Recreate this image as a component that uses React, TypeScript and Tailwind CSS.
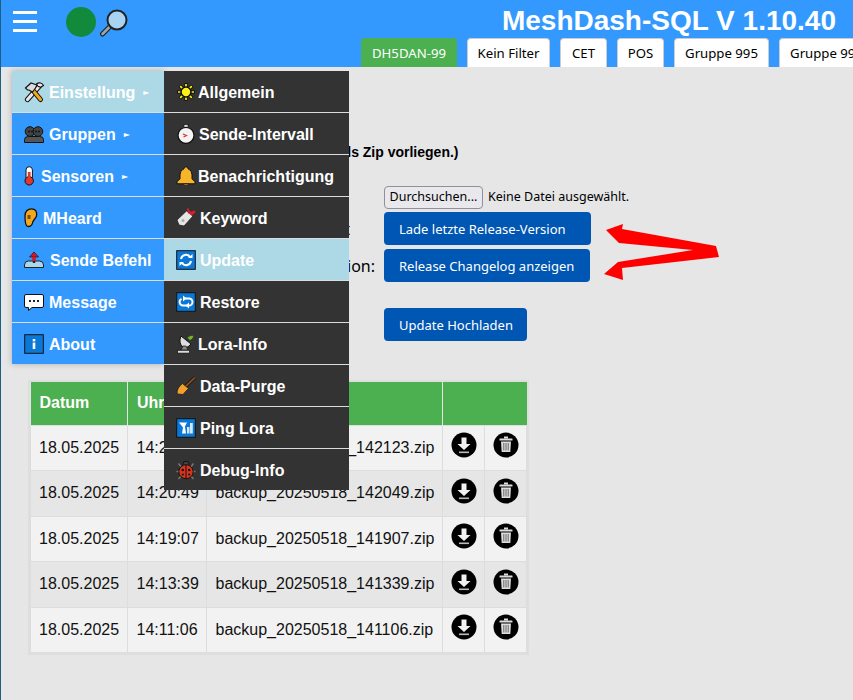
import React from "react";

const S = ({ children, className = "w-5 h-5" }: { children: React.ReactNode; className?: string }) => (
  <svg viewBox="0 0 20 20" className={className + " shrink-0 overflow-visible"}>{children}</svg>
);

const Tools = () => (
  <S>
    <path d="M3.5 17.5 L15 4.5" stroke="#111" strokeWidth="5.2" strokeLinecap="round" />
    <path d="M3.5 17.5 L15 4.5" stroke="#e8e8e8" strokeWidth="3.2" strokeLinecap="round" />
    <path d="M16.5 17.5 L7 6" stroke="#111" strokeWidth="5" strokeLinecap="round" />
    <path d="M16.5 17.5 L7 6" stroke="#f2a81d" strokeWidth="3" strokeLinecap="round" />
    <path d="M1.5 6 L7 1 L13 3 L11.5 6 L8.5 10 L5 8 L3.5 8 Z" fill="#ddd" stroke="#111" strokeWidth="1.2" />
    <path d="M12.5 2 a4.5 4.5 0 0 1 7 1.5 l-3 1.8 l-2.4 -1 z" fill="#eee" stroke="#111" strokeWidth="1.1" />
  </S>
);
const People = () => (
  <S>
    <circle cx="6" cy="7.5" r="4.8" fill="#444" stroke="#111" />
    <circle cx="14" cy="7.5" r="4.8" fill="#444" stroke="#111" />
    <circle cx="5" cy="7.5" r="1" fill="#111" />
    <circle cx="8" cy="7.5" r="1" fill="#111" />
    <circle cx="12" cy="7.5" r="1" fill="#111" />
    <circle cx="15" cy="7.5" r="1" fill="#111" />
    <path d="M.5 18.5 v-3 q0 -3 4 -3 h11 q4 0 4 3 v3 z" fill="#555" stroke="#111" />
  </S>
);
const Thermo = () => (
  <S>
    <rect x="2" y="0.7" width="6.4" height="14" rx="3.2" fill="#fff" stroke="#111" />
    <circle cx="5.2" cy="14.8" r="4.2" fill="#e0392b" stroke="#111" />
    <rect x="3.8" y="6" width="2.8" height="9" fill="#e0392b" />
  </S>
);
const Ear = () => (
  <S>
    <path d="M1 8 C1 3 4 .8 7.5 .8 C11.5 .8 13.5 4 12.5 8 C11.5 11 9 12 8.5 15 C8 18 5 19.2 3 18 C1.5 17 1 13 1 8 Z" fill="#f2a81d" stroke="#111" strokeWidth="1.3" />
    <path d="M3.5 7 h3 v4 h-3 z" fill="#7a4a10" />
  </S>
);
const Joystick = () => (
  <S>
    <path d="M.5 15 q0 -4 4 -4 h11 q4 0 4 4 v2.5 h-19 z" fill="#a8d8ee" stroke="#222" />
    <rect x="8.8" y="7" width="2.4" height="6" fill="#222" />
    <path d="M10 2 L14.5 7 H5.5 Z" fill="#d8182a" stroke="#222" strokeWidth=".8" />
    <rect x="8.3" y="7" width="3.4" height="4" fill="#d8182a" />
  </S>
);
const Speech = () => (
  <S>
    <path d="M2 2.5 h16 q1.5 0 1.5 1.5 v10 q0 1.5 -1.5 1.5 h-10 l-3.5 3 v-3 h-2.5 q-1.5 0 -1.5 -1.5 v-10 q0 -1.5 1.5 -1.5 z" fill="#fff" stroke="#111" />
    <rect x="5" y="8" width="2" height="2" fill="#222" />
    <rect x="9" y="8" width="2" height="2" fill="#222" />
    <rect x="13" y="8" width="2" height="2" fill="#222" />
  </S>
);
const Info = () => (
  <S>
    <rect x="0.7" y="0.7" width="18.6" height="18.6" fill="#0a78d6" stroke="#111" />
    <rect x="8.7" y="5" width="2.6" height="2.4" fill="#fff" />
    <rect x="8.7" y="8.6" width="2.6" height="6.4" fill="#fff" />
  </S>
);
const Sun = () => (
  <S>
    <path d="M10 1 V19 M1 10 H19 M3.6 3.6 L16.4 16.4 M16.4 3.6 L3.6 16.4" stroke="#111" strokeWidth="3" />
    <path d="M10 2 V18 M2 10 H18 M4.2 4.2 L15.8 15.8 M15.8 4.2 L4.2 15.8" stroke="#fbf01a" strokeWidth="1.7" />
    <circle cx="10" cy="10" r="5" fill="#fbf01a" stroke="#111" strokeWidth="1.6" />
  </S>
);
const Watch = () => (
  <S>
    <rect x="8" y="0.4" width="4" height="3" fill="#ddd" stroke="#111" strokeWidth=".7" />
    <circle cx="10" cy="11.3" r="8" fill="#f3f3f3" stroke="#111" strokeWidth="1.2" />
    <path d="M7 10 L10.5 11.5 L7.5 13" stroke="#d33" strokeWidth="1.2" fill="none" />
  </S>
);
const Bell = () => (
  <S>
    <path d="M10 .8 q2 0 2 2 q4 1 4 6 v4 l3 3 v2 h-18 v-2 l3 -3 v-4 q0 -5 4 -6 q0 -2 2 -2 z" fill="#f6b52a" stroke="#111" />
    <path d="M7.5 18 h5 l-1 1.5 h-3 z" fill="#c9861a" stroke="#111" strokeWidth=".5" />
  </S>
);
const Tag = () => (
  <S>
    <path d="M1 12 L10.5 3 L17 8 L8 18 L3 17 Z" fill="#e6e6e6" stroke="#222" strokeWidth=".8" />
    <path d="M11.5 .5 L13.5 5 L19 3.5 L15 7" stroke="#d21f2c" strokeWidth="2" fill="none" />
    <circle cx="7" cy="12.5" r="1.5" fill="#aaa" />
  </S>
);
const Upd = () => (
  <S>
    <rect x="0.7" y="0.7" width="18.6" height="18.6" fill="#0a78d6" stroke="#111" />
    <path d="M5 9 a5 5 0 0 1 9 -2 M15 11 a5 5 0 0 1 -9 2" stroke="#fff" strokeWidth="2" fill="none" />
    <path d="M12 8 h4.5 v-4 z M8 12 h-4.5 v4 z" fill="#fff" />
  </S>
);
const Rest = () => (
  <S>
    <rect x="0.7" y="0.7" width="18.6" height="18.6" fill="#0a78d6" stroke="#111" />
    <path d="M7.5 6.5 h5.5 a3.5 3.5 0 0 1 0 7 h-1 M12.5 13.5 h-5.5 a3.5 3.5 0 0 1 -1.5 -6.6" stroke="#fff" strokeWidth="1.9" fill="none" />
    <path d="M7 3.5 v6 l3.5 -3 z M13 10.5 v6 l-3.5 -3 z" fill="#fff" />
  </S>
);
const Dish = () => (
  <S>
    <path d="M5 2 L15 10 Q11 15 7 13 Q2 9 5 2 Z" fill="#ddd" stroke="#111" />
    <path d="M11 3.5 q4 -3 7 -2 q-1 4 -4 5 z" fill="#78b32a" stroke="#222" strokeWidth=".6" />
    <path d="M7 12 L5 16 H12 L10 12 Z" fill="#888" stroke="#111" strokeWidth=".7" />
    <rect x="1.5" y="16.3" width="12" height="2.8" fill="#ddd" stroke="#111" strokeWidth=".7" />
  </S>
);
const Broom = () => (
  <S>
    <path d="M19 1.5 L9 11" stroke="#111" strokeWidth="3.2" />
    <path d="M19 1.5 L9 11" stroke="#8a4b22" strokeWidth="1.8" />
    <path d="M6.5 7.5 L12.5 12.5 L7 18.5 L1 18 Q.5 12 6.5 7.5 Z" fill="#f2a02a" stroke="#222" strokeWidth=".9" />
  </S>
);
const Chart = () => (
  <S>
    <rect x="0.7" y="0.7" width="18.6" height="18.6" fill="#0a78d6" stroke="#111" />
    <path d="M3 4.5 h8 l-2 4 l1 7 h-4 l1 -6 z" fill="#fff" />
    <rect x="11" y="9" width="2.5" height="6.5" fill="#cfe8fb" />
    <rect x="14" y="5" width="2.8" height="10.5" fill="#cfe8fb" />
  </S>
);
const Bug = () => (
  <S>
    <path d="M2.5 3.5 L6 8 M17.5 3.5 L14 8 M.5 11.5 H4 M19.5 11.5 H16 M2.5 19 L6 15 M17.5 19 L14 15" stroke="#777" strokeWidth="1.5" />
    <circle cx="10" cy="4.5" r="3.2" fill="#444" stroke="#111" />
    <ellipse cx="10" cy="11.7" rx="7.2" ry="7" fill="#d8351f" stroke="#111" />
    <path d="M10 5 V18.5" stroke="#111" />
    <circle cx="6.8" cy="10" r="1.3" fill="#111" />
    <circle cx="13.2" cy="10" r="1.3" fill="#111" />
    <circle cx="6.8" cy="14.5" r="1.1" fill="#111" />
    <circle cx="13.2" cy="14.5" r="1.1" fill="#111" />
  </S>
);

const mainMenu = [
  { label: "Einstellung", icon: <Tools />, pad: "w-[25px]", arrow: true, active: true },
  { label: "Gruppen", icon: <People />, pad: "w-[25px]", arrow: true },
  { label: "Sensoren", icon: <Thermo />, pad: "w-[17px]", arrow: true },
  { label: "MHeard", icon: <Ear />, pad: "w-[19px]" },
  { label: "Sende Befehl", icon: <Joystick />, pad: "w-[26px]" },
  { label: "Message", icon: <Speech />, pad: "w-[25px]" },
  { label: "About", icon: <Info />, pad: "w-[25px]" },
];

const subMenu = [
  { label: "Allgemein", icon: <Sun />, pad: "w-[22px]" },
  { label: "Sende-Intervall", icon: <Watch />, pad: "w-[23px]" },
  { label: "Benachrichtigung", icon: <Bell />, pad: "w-[22px]" },
  { label: "Keyword", icon: <Tag />, pad: "w-[24px]" },
  { label: "Update", icon: <Upd />, pad: "w-[24px]", active: true },
  { label: "Restore", icon: <Rest />, pad: "w-[24px]" },
  { label: "Lora-Info", icon: <Dish />, pad: "w-[22px]" },
  { label: "Data-Purge", icon: <Broom />, pad: "w-[24px]" },
  { label: "Ping Lora", icon: <Chart />, pad: "w-[24px]" },
  { label: "Debug-Info", icon: <Bug />, pad: "w-[24px]" },
];

const rows = [
  ["18.05.2025", "14:21:23", "backup_20250518_142123.zip"],
  ["18.05.2025", "14:20:49", "backup_20250518_142049.zip"],
  ["18.05.2025", "14:19:07", "backup_20250518_141907.zip"],
  ["18.05.2025", "14:13:39", "backup_20250518_141339.zip"],
  ["18.05.2025", "14:11:06", "backup_20250518_141106.zip"],
];

const Tab = ({ label, w, active }: { label: string; w: string; active?: boolean }) => (
  <button
    className={`${w} h-[29px] pt-[1px] shrink-0 rounded-t-[4px] border border-b-0 text-[13.2px] text-center ${
      active ? "bg-[#4caf50] border-[#4caf50] text-white" : "bg-white border-[#ccc] text-black"
    }`}
  >
    {label}
  </button>
);

const Download = () => (
  <svg viewBox="0 0 26 26" className="w-[26px] h-[26px] block mx-auto mb-[5px]">
    <circle cx="13" cy="13" r="12.5" fill="#000" />
    <path d="M10.5 5.5 h5 v6.5 h4 L13 18 L6.5 12 h4 z" fill="#f2f2f2" />
    <rect x="8" y="19.5" width="10" height="1.6" fill="#bbb" />
  </svg>
);
const Trash = () => (
  <svg viewBox="0 0 26 26" className="w-[26px] h-[26px] block mx-auto mb-[5px]">
    <circle cx="13" cy="13" r="12.5" fill="#000" />
    <rect x="11" y="4.5" width="4" height="2" fill="#ddd" />
    <rect x="6.5" y="6.5" width="13" height="2" rx=".5" fill="#ddd" />
    <path d="M8 9.5 h10 l-.7 10.5 h-8.6 z" fill="#ddd" />
    <path d="M10.8 11 v7.5 M13 11 v7.5 M15.2 11 v7.5" stroke="#666" strokeWidth="1" />
  </svg>
);

const ActionButton = ({ label, w }: { label: string; w: string }) => (
  <button className={`${w} h-[33px] pl-[15px] pt-[2px] text-left rounded-[4px] bg-[#0056b3] text-white text-[13px] whitespace-nowrap`}>
    {label}
  </button>
);

export default function App() {
  return (
    <div className="relative w-[853px] h-[700px] overflow-hidden bg-[#e6e6e6] border-l border-[#1b5f85] font-['Noto_Sans',sans-serif]">
      <header className="h-[67px] bg-[#3399ff] flex flex-col pl-[12px] overflow-hidden">
        <div className="flex h-[38px] items-start">
          <div className="w-[24px] mt-[11px] flex flex-col gap-[6px]">
            <span className="block h-[3px] bg-white" />
            <span className="block h-[3px] bg-white" />
            <span className="block h-[3px] bg-white" />
          </div>
          <span className="ml-[29px] mt-[7px] w-[30px] h-[30px] rounded-full bg-[#118a3c]" />
          <svg viewBox="0 0 30 30" className="ml-[3px] w-[30px] h-[30px] mt-[8px]">
            <path d="M3.5 26 L11 18.5" stroke="#222" strokeWidth="5" strokeLinecap="round" />
            <path d="M3.5 26 L11 18.5" stroke="#9aa7ad" strokeWidth="2.6" strokeLinecap="round" />
            <circle cx="18" cy="12" r="9.5" fill="#a8d4f2" stroke="#222" strokeWidth="2" />
          </svg>
          <h1 className="ml-auto mr-[17px] mt-[4px] font-['Liberation_Sans',sans-serif] font-bold text-[28px] leading-[34px] text-white whitespace-nowrap">
            MeshDash-SQL V 1.10.40
          </h1>
        </div>
        <nav className="flex gap-[10px] pl-[348px] h-[29px] w-[900px]">
          <Tab label="DH5DAN-99" w="w-[96px]" active />
          <Tab label="Kein Filter" w="w-[83px]" />
          <Tab label="CET" w="w-[47px]" />
          <Tab label="POS" w="w-[47px]" />
          <Tab label="Gruppe 995" w="w-[95px]" />
          <Tab label="Gruppe 999" w="w-[95px]" />
        </nav>
      </header>

      <main className="pt-[78px]">
        <p className="pl-[242px] font-['Liberation_Sans',sans-serif] font-bold text-[14px] leading-[15px] h-[15px] text-black">
          (Update muss als Zip vorliegen.)
        </p>
        <div className="mt-[26px] pl-[383px] flex items-center h-[23px] gap-[5px] text-[12.5px] text-black">
          <button className="h-[23px] w-[99px] rounded-[4px] border border-[#8f8f9d] bg-[#e9e9ed] text-[12.5px]">
            Durchsuchen...
          </button>
          <span>Keine Datei ausgewählt.</span>
        </div>
        <div className="mt-[3px] flex items-center">
          <span className="w-[349px] text-right text-[16px] whitespace-nowrap">Download Paket</span>
          <span className="ml-[34px]"><ActionButton label="Lade letzte Release-Version" w="w-[207px]" /></span>
        </div>
        <div className="mt-[4px] flex items-center">
          <span className="w-[374px] text-right text-[16px] whitespace-nowrap">Changelog der Version:</span>
          <span className="ml-[9px]"><ActionButton label="Release Changelog anzeigen" w="w-[206px]" /></span>
        </div>
        <div className="mt-[26px] pl-[383px]">
          <ActionButton label="Update Hochladen" w="w-[143px]" />
        </div>

        <table className="mt-[41px] ml-[29px] w-[496px] table-fixed border-collapse font-['Liberation_Sans',sans-serif] text-[16px] text-[#111] outline-2 outline-[#dedede]">
          <colgroup>
            <col className="w-[97px]" />
            <col className="w-[79px]" />
            <col className="w-[236px]" />
            <col className="w-[42px]" />
            <col className="w-[42px]" />
          </colgroup>
          <thead>
            <tr className="h-[43px] bg-[#4caf50] text-white font-bold">
              <th className="border-r border-[#e6e6e6] pl-[9px] text-left">Datum</th>
              <th className="border-r border-[#e6e6e6] pl-[9px] text-left">Uhrzeit</th>
              <th className="border-r border-[#e6e6e6] pl-[8.5px] text-left">Datei</th>
              <th colSpan={2} />
            </tr>
          </thead>
          <tbody>
            {rows.map((r, i) => (
              <tr key={r[2]} className={`h-[45.5px] ${i % 2 ? "bg-[#e6e6e6]" : "bg-[#f2f2f2]"}`}>
                <td className="border border-[#dddddd] pl-[8px]">{r[0]}</td>
                <td className="border border-[#dddddd] pl-[8.5px]">{r[1]}</td>
                <td className="border border-[#dddddd] pl-[8.5px] whitespace-nowrap">{r[2]}</td>
                <td className="border border-[#dddddd]"><Download /></td>
                <td className="border border-[#dddddd]"><Trash /></td>
              </tr>
            ))}
          </tbody>
        </table>
      </main>

      {/* Annotation arrows over the page */}
      <svg viewBox="0 0 125 65" className="absolute left-[599px] top-[220px] w-[125px] h-[65px]">
        <polygon points="6,10 23,4 22,9 116,26 119,37 22,48 23,60 4,54 18,42 93,30 19,23" fill="#ff0000" />
      </svg>

      {/* Open dropdown menu */}
      <div className="absolute left-[11px] top-[71px] flex items-start font-['Liberation_Sans',sans-serif] font-bold text-[16px] text-white">
        <ul className="w-[152px] shadow-[0_0_6px_rgba(0,0,0,0.25)]">
          {mainMenu.map((m) => (
            <li
              key={m.label}
              className={`h-[42px] last:h-[41px] border-b last:border-b-0 border-[#dddddd] pl-[12px] flex items-center ${
                m.active ? "bg-[#add8e6]" : "bg-[#3399ff]"
              }`}
            >
              <span className={`${m.pad} shrink-0`}>{m.icon}</span>
              <span className="pt-[2px]">{m.label}</span>
              {m.arrow && <span className="ml-[8px] pt-[2px] text-[8px] font-['DejaVu_Sans',sans-serif] font-normal">►</span>}
            </li>
          ))}
        </ul>
        <ul className="w-[185px]">
          {subMenu.map((m) => (
            <li
              key={m.label}
              className={`h-[42px] last:h-[41px] border-b last:border-b-0 border-[#dddddd] pl-[12px] flex items-center ${
                m.active ? "bg-[#add8e6]" : "bg-[#333333]"
              }`}
            >
              <span className={`${m.pad} shrink-0`}>{m.icon}</span>
              <span className="pt-[2px]">{m.label}</span>
            </li>
          ))}
        </ul>
      </div>
    </div>
  );
}
